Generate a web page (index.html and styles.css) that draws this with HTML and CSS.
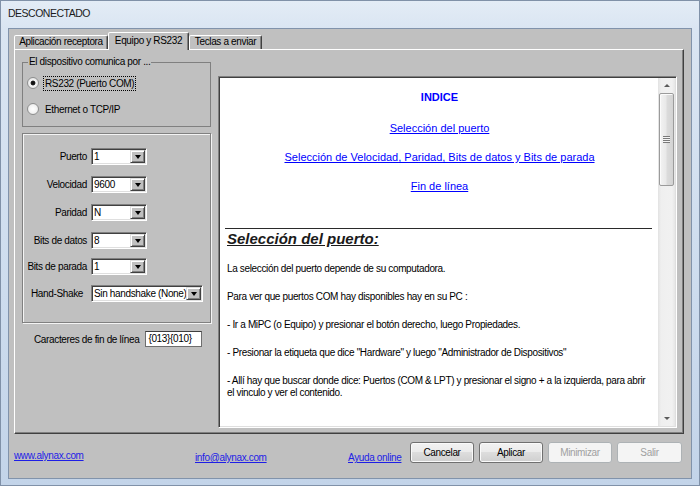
FILE: index.html
```html
<!DOCTYPE html>
<html lang="es">
<head>
<meta charset="utf-8">
<title>DESCONECTADO</title>
<link rel="stylesheet" href="styles.css">
</head>
<body>
<div class="window">
  <div class="titlebar">DESCONECTADO</div>
  <div class="client">
    <div class="tabs">
      <div class="tab tab-app">Aplicación receptora</div>
      <div class="tab tab-equipo active">Equipo y RS232</div>
      <div class="tab tab-teclas">Teclas a enviar</div>
    </div>
    <div class="panel">
      <div class="leftcol">
        <fieldset class="group">
          <legend>El dispositivo comunica por ...</legend>
          <div class="radio-row first"><span class="radio checked"></span><span class="focus">RS232 (Puerto COM)</span></div>
          <div class="radio-row"><span class="radio"></span><span class="radio-label">Ethernet o TCP/IP</span></div>
        </fieldset>
        <div class="settings">
          <div class="row"><span class="label">Puerto</span><div class="combo"><span class="value">1</span><span class="drop"><i class="arrow"></i></span></div></div>
          <div class="row"><span class="label">Velocidad</span><div class="combo"><span class="value">9600</span><span class="drop"><i class="arrow"></i></span></div></div>
          <div class="row"><span class="label">Paridad</span><div class="combo"><span class="value">N</span><span class="drop"><i class="arrow"></i></span></div></div>
          <div class="row"><span class="label">Bits de datos</span><div class="combo"><span class="value">8</span><span class="drop"><i class="arrow"></i></span></div></div>
          <div class="row row-tight"><span class="label">Bits de parada</span><div class="combo"><span class="value">1</span><span class="drop"><i class="arrow"></i></span></div></div>
          <div class="row row-hs"><span class="label label-hs">Hand-Shake</span><div class="combo combo-wide"><span class="value">Sin handshake (None)</span><span class="drop"><i class="arrow"></i></span></div></div>
        </div>
        <div class="eol"><span class="eol-label">Caracteres de fin de línea</span><span class="textbox">{013}{010}</span></div>
      </div>
      <div class="viewer">
        <div class="doc">
          <div class="index">INDICE</div>
          <a class="toc first" href="#p1">Selección del puerto</a>
          <a class="toc" href="#p2">Selección de Velocidad, Paridad, Bits de datos y Bits de parada</a>
          <a class="toc" href="#p3">Fin de línea</a>
          <hr class="rule">
          <h2 class="heading" id="p1">Selección del puerto:</h2>
          <p class="para first">La selección del puerto depende de su computadora.</p>
          <p class="para">Para ver que puertos COM hay disponibles hay en su PC :</p>
          <p class="para">- Ir a MiPC (o Equipo) y presionar el botón derecho, luego Propiedades.</p>
          <p class="para">- Presionar la etiqueta que dice "Hardware" y luego "Administrador de Dispositivos"</p>
          <p class="para">- Allí hay que buscar donde dice: Puertos (COM &amp; LPT) y presionar el signo + a la izquierda, para abrir<br>el vinculo y ver el contenido.</p>
        </div>
        <div class="scrollbar">
          <div class="sb-btn"><i class="sb-up"></i></div>
          <div class="sb-thumb"><i class="grip"></i></div>
          <div class="sb-track"></div>
          <div class="sb-btn"><i class="sb-down"></i></div>
        </div>
      </div>
    </div>
    <div class="footer">
      <div class="flink flink-web"><a href="#">www.alynax.com</a></div>
      <div class="flink flink-mail"><a href="#">info@alynax.com</a></div>
      <div class="flink flink-help"><a href="#">Ayuda online</a></div>
      <div class="buttons">
        <button class="btn">Cancelar</button>
        <button class="btn">Aplicar</button>
        <button class="btn" disabled>Minimizar</button>
        <button class="btn" disabled>Salir</button>
      </div>
    </div>
  </div>
</div>
</body>
</html>
```
FILE: styles.css
```css
* { box-sizing: border-box; }
html, body { margin: 0; padding: 0; }
body {
  width: 700px;
  height: 486px;
  overflow: hidden;
  font-family: "Liberation Sans", Arial, sans-serif;
  font-size: 10px;
  letter-spacing: -0.35px;
  color: #000;
  background: #c9d8ea;
}
.window {
  width: 700px;
  height: 486px;
  display: flex;
  flex-direction: column;
  padding: 0 7px 6px 7px;
  border: 1px solid #8091a8;
  background: linear-gradient(180deg, #e3ecf6 0px, #dae5f2 28px, #cddcee 60%, #c3d4e9 100%);
}
.titlebar {
  height: 27px;
  padding-top: 5px;
  font-size: 10.5px;
  letter-spacing: -0.5px;
  line-height: 14px;
  color: #1b1b1b;
}
.client {
  flex: 1;
  display: flex;
  flex-direction: column;
  background: #c0c0c0;
  border: 1px solid #8193ab;
  padding: 3px 7px 0 5px;
}
/* tabs */
.tabs {
  display: flex;
  align-items: flex-end;
  height: 17px;
}
.tab {
  height: 14px;
  line-height: 12px;
  text-align: center;
  background: #c0c0c0;
  border: 1px solid;
  border-bottom: 0;
  border-color: #fff #404040 transparent #fff;
  box-shadow: inset -1px 0 #808080;
  border-radius: 2px 2px 0 0;
}
.tab-app { width: 94px; }
.tab-equipo { width: 81px; }
.tab-teclas { width: 73px; }
.tab.active {
  height: 18px;
  margin-bottom: -1px;
  padding-top: 2px;
  position: relative;
  z-index: 1;
}
/* panel */
.panel {
  flex: 1;
  display: flex;
  align-items: flex-start;
  border: 1px solid;
  border-color: #fff #404040 #404040 #fff;
  box-shadow: inset -1px -1px #808080;
  padding: 0 6px 5px 7px;
}
.leftcol {
  width: 189px;
  display: flex;
  flex-direction: column;
}
.group {
  margin: 6px 0 0;
  padding: 0 0 9px 4px;
  border: 1px solid #808080;
  min-width: 0;
}
.group legend {
  padding: 0 1px;
  margin-left: 1px;
  line-height: 12px;
}
.radio-row {
  display: flex;
  align-items: center;
  height: 16px;
  margin-top: 10px;
}
.radio-row.first { margin-top: 7px; }
.radio {
  width: 12px;
  height: 12px;
  border-radius: 50%;
  border: 1px solid #8e8f8f;
  background: radial-gradient(circle, #ffffff 0, #f4f4f4 50%, #dcdcdc 100%);
  margin-right: 5px;
  flex: none;
}
.radio.checked {
  background: radial-gradient(circle, #0d0d0d 0, #1a1a1a 2px, #f4f4f4 2.8px, #dcdcdc 100%);
}
.focus {
  outline: 1px dotted #000;
  outline-offset: 0;
  padding: 0 1px;
  line-height: 13px;
}
.radio-label { padding-left: 1px; }
.settings {
  margin-top: 6px;
  height: 190px;
  border: 1px solid #808080;
  box-shadow: inset 1px 1px #f4f4f4, 1px 1px #f4f4f4;
  padding-top: 14px;
}
.row {
  display: flex;
  align-items: center;
  height: 17px;
  margin-top: 11px;
}
.row:first-child { margin-top: 0; }
.row.row-tight { margin-top: 9px; }
.row.row-hs { margin-top: 10px; }
.label {
  width: 64px;
  margin-right: 4px;
  text-align: right;
  white-space: nowrap;
}
.label-hs { padding-right: 4px; }
.combo {
  width: 56px;
  height: 17px;
  display: flex;
  align-items: center;
  background: #fff;
  border: 1px solid;
  border-color: #808080 #fff #fff #808080;
  box-shadow: inset 1px 1px #404040, inset -1px -1px #dfdfdf;
  padding: 1px 1px 1px 2px;
}
.combo-wide { width: 112px; }
.value {
  flex: 1;
  line-height: 13px;
  white-space: nowrap;
  overflow: hidden;
}
.drop {
  width: 15px;
  height: 13px;
  flex: none;
  display: flex;
  align-items: center;
  justify-content: center;
  background: #c0c0c0;
  border: 1px solid;
  border-color: #dfdfdf #404040 #404040 #dfdfdf;
  box-shadow: inset 1px 1px #fff, inset -1px -1px #808080;
}
.arrow {
  width: 0;
  height: 0;
  border-left: 3.5px solid transparent;
  border-right: 3.5px solid transparent;
  border-top: 4px solid #000;
  margin-top: 1px;
}
.eol {
  display: flex;
  align-items: center;
  margin-top: 8px;
  padding-left: 12px;
}
.textbox {
  margin-left: 6px;
  width: 57px;
  height: 16px;
  line-height: 14px;
  padding: 0 2px;
  background: #fff;
  border: 1px solid #6e6e6e;
  border-top-color: #3e3e3e;
}
/* viewer */
.viewer {
  flex: 1;
  align-self: stretch;
  margin: 26px 0 0 7px;
  display: flex;
  background: #fff;
  border: 1px solid;
  border-color: #808080 #fff #fff #808080;
  box-shadow: inset 1px 1px #404040, inset -1px -1px #dfdfdf;
  padding: 1px;
}
.doc {
  flex: 1;
  padding: 12px 6px 0 7px;
  overflow: hidden;
}
.index {
  text-align: center;
  font-weight: bold;
  font-size: 11px;
  letter-spacing: 0;
  line-height: 14px;
  color: #0000ff;
}
.toc {
  display: block;
  text-align: center;
  margin-top: 15px;
  font-size: 11px;
  letter-spacing: 0;
  line-height: 14px;
  color: #0000ff;
  text-decoration: underline;
}
.toc.first { margin-top: 17px; }
.rule {
  margin: 35px 0 0 -2px;
  border: 0;
  border-top: 1px solid #2a2a2a;
  height: 0;
}
.heading {
  margin: 1px 0 0;
  font-size: 15px;
  font-weight: bold;
  font-style: italic;
  line-height: 18px;
  letter-spacing: 0;
  text-decoration: underline;
  color: #1a1a1a;
}
.para {
  margin: 16px 0 0;
  line-height: 12px;
  white-space: nowrap;
}
.para.first { margin-top: 15px; }
/* scrollbar */
.scrollbar {
  width: 17px;
  display: flex;
  flex-direction: column;
  background: linear-gradient(90deg, #e2e2e2 0, #efefef 3px, #f1f1f1 14px, #e6e6e6 100%);
}
.sb-btn {
  height: 15px;
  display: flex;
  align-items: center;
  justify-content: center;
}
.sb-up {
  width: 0; height: 0;
  border-left: 3px solid transparent;
  border-right: 3px solid transparent;
  border-bottom: 3px solid #5a5a5a;
}
.sb-down {
  width: 0; height: 0;
  border-left: 3px solid transparent;
  border-right: 3px solid transparent;
  border-top: 3px solid #5a5a5a;
}
.sb-thumb {
  height: 93px;
  margin: 0 1px;
  border: 1px solid #9b9b9b;
  border-radius: 2px;
  background: linear-gradient(90deg, #f3f3f3 0, #e9e9e9 45%, #dbdbdb 55%, #d3d3d3 100%);
  box-shadow: inset 1px 1px #fbfbfb;
  display: flex;
  align-items: center;
  justify-content: center;
}
.grip {
  width: 7px;
  height: 7px;
  background: repeating-linear-gradient(180deg, #7a7a7a 0 1px, #f4f4f4 1px 2px);
}
.sb-track { flex: 1; }
/* footer */
.footer {
  height: 44px;
  display: flex;
  align-items: flex-start;
  padding-top: 8px;
}
.flink a {
  color: #1e1ee6;
  text-decoration: underline;
  line-height: 12px;
}
.flink { line-height: 12px; }
.flink-web { width: 181px; margin-top: 8px; }
.flink-mail { width: 153px; margin-top: 10px; }
.flink-help { width: 62px; margin-top: 10px; }
.buttons {
  display: flex;
  gap: 5px;
}
.btn {
  width: 64px;
  height: 21px;
  padding: 0;
  font-family: "Liberation Sans", Arial, sans-serif;
  font-size: 10px;
  letter-spacing: -0.35px;
  color: #000;
  border: 1px solid #707070;
  border-radius: 3px;
  background: linear-gradient(180deg, #f2f2f2 0%, #ebebeb 45%, #dddddd 50%, #cfcfcf 100%);
  box-shadow: inset 0 0 0 1px #fafafa;
}
.btn:last-child { width: 65px; }
.btn:disabled {
  color: #a0a0a0;
  border-color: #adb2b5;
  background: #f4f4f4;
  box-shadow: none;
}
```
